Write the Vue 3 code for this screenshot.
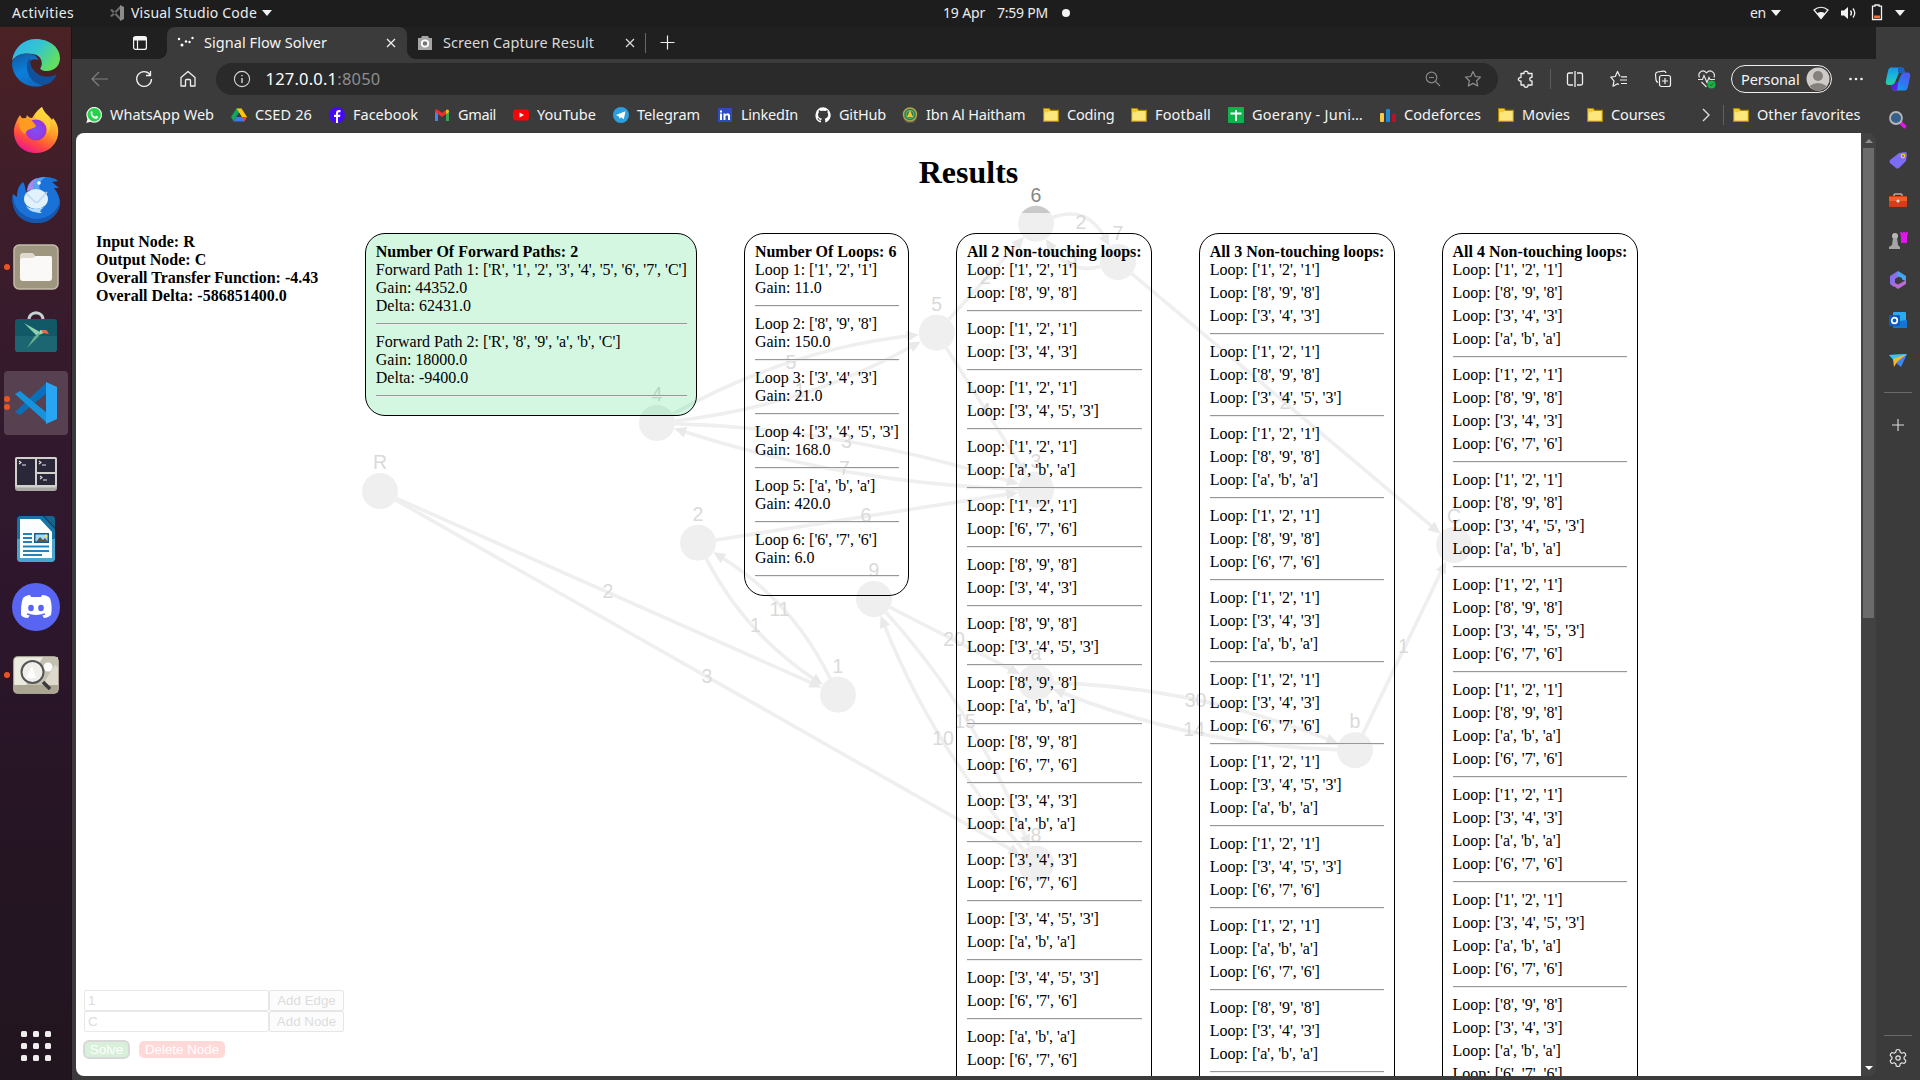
<script setup>
const vFit = {
  mounted(el, { value }) {
    const natural = el.getBoundingClientRect().width
    el.style.letterSpacing = (value - natural) / el.textContent.length + 'px'
  }
}

const bookmarks = [
  { name: 'WhatsApp Web', icon: 'whatsapp', w: 104 },
  { name: 'CSED 26', icon: 'drive', w: 57 },
  { name: 'Facebook', icon: 'facebook', w: 65 },
  { name: 'Gmail', icon: 'gmail', w: 38 },
  { name: 'YouTube', icon: 'youtube', w: 59 },
  { name: 'Telegram', icon: 'telegram', w: 63 },
  { name: 'LinkedIn', icon: 'linkedin', w: 57 },
  { name: 'GitHub', icon: 'github', w: 47 },
  { name: 'Ibn Al Haitham', icon: 'ibn', w: 99.5 },
  { name: 'Coding', icon: 'folder', w: 47.5 },
  { name: 'Football', icon: 'folder', w: 56 },
  { name: 'Goerany - Juni…', icon: 'sheet', w: 111 },
  { name: 'Codeforces', icon: 'codeforces', w: 77 },
  { name: 'Movies', icon: 'folder', w: 48 },
  { name: 'Courses', icon: 'folder', w: 54 }
]
const bookmarkWidths = [145, 98, 105, 79, 100, 104, 98, 87, 141, 88, 97, 152, 118, 89, 80]

const A = "['1', '2', '1']"
const B = "['8', '9', '8']"
const C = "['3', '4', '3']"
const D = "['3', '4', '5', '3']"
const E = "['a', 'b', 'a']"
const F = "['6', '7', '6']"

const paths = [
  { nodes: "['R', '1', '2', '3', '4', '5', '6', '7', 'C']", gain: '44352.0', delta: '62431.0' },
  { nodes: "['R', '8', '9', 'a', 'b', 'C']", gain: '18000.0', delta: '-9400.0' }
]
const loops = [
  { nodes: A, gain: '11.0' },
  { nodes: B, gain: '150.0' },
  { nodes: C, gain: '21.0' },
  { nodes: D, gain: '168.0' },
  { nodes: E, gain: '420.0' },
  { nodes: F, gain: '6.0' }
]
const groups = [
  {
    n: 2,
    sets: [[A, B], [A, C], [A, D], [A, E], [A, F], [B, C], [B, D], [B, E], [B, F], [C, E], [C, F], [D, E], [D, F], [E, F]]
  },
  {
    n: 3,
    sets: [[A, B, C], [A, B, D], [A, B, E], [A, B, F], [A, C, E], [A, C, F], [A, D, E], [A, D, F], [A, E, F], [B, C, E], [B, C, F]]
  },
  {
    n: 4,
    sets: [[A, B, C, E], [A, B, C, F], [A, B, D, E], [A, B, D, F], [A, B, E, F], [A, C, E, F], [A, D, E, F], [B, C, E, F]]
  }
]

const nodes = {
  R: [380, 491], 4: [657, 423], 5: [936.7, 332.7], 2: [698, 542.7], 9: [874, 599], 1: [838, 694.7],
  8: [1036, 863.7], a: [1036, 682.3], 6: [1036, 223.7], 7: [1118, 262], 3: [1036, 489.7], C: [1454, 545], b: [1355, 750.2]
}
const edgeList = [
  ['R', '1', '2'], ['R', '8', '3'],
  ['2', '1', '1', -23, 15], ['1', '2', '11', 25, -17],
  ['4', '5', '5', -10, -28], ['4', '5', '1', 8, 28],
  ['4', '3', '3', 2, -27], ['3', '4', '7', -2, 27],
  ['2', '3', '6'], ['5', '6', '2'], ['5', '3', '4'],
  ['6', '7', '2', 10, -38], ['7', '6', '3', -8, 32],
  ['7', 'C', '2'], ['9', 'a', '20'],
  ['8', '9', '10', -22, 16], ['9', '8', '15', 22, -18],
  ['a', 'b', '30', 2, -29], ['b', 'a', '14', -1, 29],
  ['b', 'C', '1']
]
const R = 18
const edges = edgeList.map(([s, t, label, ox = 0, oy = 0]) => {
  const p = nodes[s]
  const q = nodes[t]
  const c = [(p[0] + q[0]) / 2 + ox, (p[1] + q[1]) / 2 + oy]
  const toward = (from, d) => {
    const dx = c[0] - from[0]
    const dy = c[1] - from[1]
    const l = Math.hypot(dx, dy)
    return [from[0] + (dx / l) * d, from[1] + (dy / l) * d, dx / l, dy / l]
  }
  const a = toward(p, R)
  const b = toward(q, R + 9)
  const tip = toward(q, R)
  const base = toward(q, R + 12)
  const nx = -tip[3] * 5.5
  const ny = tip[2] * 5.5
  return {
    label,
    d: `M${a[0]} ${a[1]}Q${c[0]} ${c[1]} ${b[0]} ${b[1]}`,
    head: `${tip[0]},${tip[1]} ${base[0] + nx},${base[1] + ny} ${base[0] - nx},${base[1] - ny}`,
    x: (p[0] + q[0]) / 2 + ox / 2 - 1,
    y: (p[1] + q[1]) / 2 + oy / 2 + 5.5
  }
})
</script>

<template>
  <div class="desktop">
    <header class="topbar">
      <span class="activities"><span v-fit="62">Activities</span></span>
      <svg class="code-mini" width="16" height="16" viewBox="0 0 16 16"><path d="M1 5l2-1 8 8-0 3zM1 11l2 1 8-8V1z" fill="#6d6d6d" /><path d="M11 0l4 2v12l-4 2z" fill="#8b8b8b" /></svg>
      <span class="appname"><span v-fit="126">Visual Studio Code</span></span>
      <i class="tri"></i>
      <span class="date"><span v-fit="42">19 Apr</span></span>
      <span class="time"><span v-fit="51">7:59 PM</span></span>
      <i class="rec"></i>
      <span class="lang"><span v-fit="16">en</span></span>
      <i class="tri"></i>
      <svg class="wifi" width="16" height="14" viewBox="0 0 16 14"><path d="M1 4C5 .3 11 .3 15 4L8 12.5z" fill="none" stroke="#f2f2f2" stroke-width="1.2" /><path d="M4 7.2Q8 4.6 12 7.2L8 12.7z" fill="#f2f2f2" /></svg>
      <svg class="vol" width="17" height="14" viewBox="0 0 17 14"><path d="M0 4.500h3L7 1v12L3 9.500H0z" fill="#f2f2f2" /><path d="M9.500 4.500q2 2.500 0 5M12 2.500q3.500 4.500 0 9" fill="none" stroke="#f2f2f2" stroke-width="1.300" /></svg>
      <svg class="bat" width="12" height="17" viewBox="0 0 12 17"><path d="M4 1h4v1.200h2.500v13.300h-9V2.200H4z" fill="none" stroke="#f2f2f2" stroke-width="1.300" /><rect x="3" y="11.500" width="6" height="2.500" fill="#f0743a" /></svg>
      <i class="tri"></i>
    </header>

    <div class="main">
      <nav class="dock">
        <div class="slot">
          <svg width="48" height="48" viewBox="0 0 48 48">
            <defs>
              <linearGradient id="e1" x1="0" y1="0" x2="1" y2=".5"><stop offset="0" stop-color="#2fb0f0" /><stop offset=".55" stop-color="#35c5d0" /><stop offset="1" stop-color="#62df60" /></linearGradient>
              <linearGradient id="e2" x1="0" y1="0" x2=".4" y2="1"><stop offset="0" stop-color="#12589f" /><stop offset=".6" stop-color="#0b7fdc" /><stop offset="1" stop-color="#0f6cc4" /></linearGradient>
            </defs>
            <path d="M0 22C2 8 12 0 24 0c14 0 24 9 24 19 0 8-6 13-13 13-5 0-8-2-6-4 2-3 1-12-8-13C12 13 3 16 0 22z" fill="url(#e1)" />
            <path d="M0 24c2-8 11-11 18-9 6 1 8 4 8 6-7-3-12 3-9 12 3 8 10 13 15 13C16 52 0 40 0 24z" fill="url(#e2)" />
            <path d="M18 19c-7 6-2 27 14 27 6-1 10-5 12-9 1-1 0-2-1-1-14 6-26-5-25-17z" fill="#11509a" />
          </svg>
        </div>
        <div class="slot">
          <svg class="up1" width="46" height="46" viewBox="0 0 46 46">
            <defs>
              <linearGradient id="f1" x1=".8" y1="0" x2=".3" y2="1"><stop offset="0" stop-color="#fff14a" /><stop offset=".45" stop-color="#ff9a28" /><stop offset=".75" stop-color="#ff4a40" /><stop offset="1" stop-color="#ee1590" /></linearGradient>
              <radialGradient id="f2"><stop offset="0" stop-color="#7a52f5" /><stop offset="1" stop-color="#9b34dc" /></radialGradient>
            </defs>
            <path d="M7 8c1 3 3 4 6 3l1-3c1 2 3 3 5 3C22 7 24 3 29 0c2 6 7 8 10 13l1-2c4 5 6 10 5 17-2 11-11 18-22 18C9 46 0 36 1 22c1-5 3-10 6-14z" fill="url(#f1)" />
            <circle cx="23" cy="23" r="10.500" fill="url(#f2)" />
            <path d="M6 13c6-3 12-3 17 6-3 4-8 1-11 8C8 25 5 19 6 13z" fill="#ff9c20" />
            <path d="M29 0c-6 5-8 8-7 12 7 0 14 6 12 15 6-7 3-15-1-19-2-2-3-5-4-8z" fill="#ffd83c" opacity=".7" />
          </svg>
        </div>
        <div class="slot">
          <svg class="down1" width="48" height="46" viewBox="0 0 48 46">
            <path d="M1 17l4 3C5 13 7 8 11 5c2 3 3 8 3 12L16 8C20 1 28 0 34 0c4 0 9 1 12 4l-6 1 7 6-5 0c4 5 6 10 6 16-2 12-12 19-23 19C9 46-2 34 1 17z" fill="#1a72d8" />
            <path d="M1 17c0 11 6 22 22 25 13 0 22-7 25-18C47 38 37 46 25 46 8 46-2 33 1 17z" fill="#1556ae" />
            <path d="M16 11C21 2 28 0 34 0c-7 3-8 10-5 17z" fill="#58a2f4" />
            <path d="M15 14c1-7 5-12 11-13-5 4-6 7-5 11z" fill="#ae86e9" />
            <ellipse cx="24" cy="22" rx="12" ry="10" fill="#e3f1fc" /><path d="M14 16l9 9q2 1 4-1l8-9" fill="none" stroke="#bbd8ef" stroke-width="1.500" /><path d="M14 29c4 3 10 4 18 1-4 4-5 4-2 6-8 0-13-2-16-7z" fill="#b8dcff" /><circle cx="27" cy="6" r="1.800" fill="#fff" />
          </svg>
        </div>
        <div class="slot"><i class="run one"></i>
          <svg width="46" height="46" viewBox="0 0 46 46"><rect x="1" y="1" width="44" height="44" rx="5" fill="#9f9680" stroke="#c2bca9" stroke-width="1.500" /><path d="M7 12q0-3 3-3h9q2 0 3 3h15q2 0 2 2v10H7z" fill="#dfdacd" /><path d="M7 16q0-1 2-2h11l3-2h14q2 0 2 2v20q0 3-3 3H10q-3 0-3-3z" fill="#faf9f8" /></svg>
        </div>
        <div class="slot">
          <svg class="up3" width="44" height="42" viewBox="0 0 44 42"><path d="M15 10C14-1 30-1 29 10" fill="none" stroke="#c9d0cf" stroke-width="3" /><rect x="1" y="8" width="42" height="33" rx="3" fill="#125967" /><path d="M1 25h42v13q0 3-3 3H4q-3 0-3-3z" fill="#1c6672" /><path d="M10 12l16 9-2 5z" fill="#8ed1ac" /><path d="M13 37l7-11 6-5-2 5z" fill="#68ad90" /><path d="M26 19l8 1-9 4z" fill="#9bd9bb" /><path d="M27 19h5l3 4-6-1z" fill="#fa6541" /></svg>
        </div>
        <div class="slot active"><i class="run two"></i><i class="run three"></i>
          <svg width="42" height="42" viewBox="0 0 42 42"><path d="M0 30l5 3L32 11V0z" fill="#0a6fb8" /><path d="M0 12l5-3 27 22v10z" fill="#1793dd" /><path d="M31 0l11 5v32l-11 5z" fill="#2aa5f4" /></svg>
        </div>
        <div class="slot">
          <svg class="down3" width="42" height="34" viewBox="0 0 42 34"><rect width="42" height="34" rx="3" fill="#a9a7a3" /><rect width="42" height="30.500" rx="2" fill="#d2d0cc" /><path d="M2 2h18v26H2zM22 2h18v13H22zM22 17h18v11H22z" fill="#292738" /><path d="M4 4l2 1.500L4 7M7 8h4M24 4l2 1.500L24 7M27 8h4M25 19l2 1.500-2 1.500M28 23h4" fill="none" stroke="#e8e8e8" stroke-width="1.100" /></svg>
        </div>
        <div class="slot">
          <svg width="38" height="46" viewBox="0 0 38 46"><path d="M4 0h22l12 13v29q0 4-4 4H4q-4 0-4-4V4q0-4 4-4z" fill="#1574a4" /><path d="M0 23h38v19q0 4-4 4H4q-4 0-4-4z" fill="#47a6d0" /><path d="M27 0h8q3 0 3 3v9z" fill="#16658f" /><path d="M3 3h20l12 13v26H3z" fill="#fcfdfe" /><rect x="17" y="17" width="15" height="10" fill="#1a5c86" /><rect x="18.500" y="18.500" width="12" height="7" fill="#9edcfa" /><path d="M19 26l4-5 3 3 2-2 3 4z" fill="#595752" /><circle cx="29" cy="20" r="1.500" fill="#ffe058" /><path d="M6 18h9M6 22h9M6 26h9M6 30.500h26M6 35h26M6 39h19" stroke="#2382b8" stroke-width="2" /></svg>
        </div>
        <div class="slot">
          <svg width="48" height="48" viewBox="0 0 48 48"><circle cx="24" cy="24" r="24" fill="#5865f2" /><path d="M18 12l1 2h10l1-2c3 0 6 1 8 3 2 6 2 12 1 17-2 2-5 3-7 3l-2-3H18l-2 3c-3 0-6-1-7-3 0-6 0-12 2-17 2-2 5-3 7-3z" fill="#fff" /><ellipse cx="19" cy="25" rx="2.800" ry="3.200" fill="#5865f2" /><ellipse cx="29" cy="25" rx="2.800" ry="3.200" fill="#5865f2" /><path d="M15 31q9 3.500 18 0" fill="none" stroke="#5865f2" stroke-width="1.400" /></svg>
        </div>
        <div class="slot"><i class="run one"></i>
          <svg width="46" height="38" viewBox="0 0 46 38"><rect x=".7" y=".7" width="44.600" height="36.600" rx="4" fill="#ecebe2" stroke="#b9b5a4" /><path d="M30 1h15v28H13z" fill="#c4c1b1" /><path d="M42 9l3 2v19H29z" fill="#dddacd" /><circle cx="35" cy="11" r="4.500" fill="#fbfbfb" /><path d="M1 29h44v4q0 4-4 4H5q-4 0-4-4z" fill="#aaa692" /><circle cx="19.500" cy="16" r="11" fill="#f0efeb" stroke="#555" stroke-width="2" /><path d="M13 22l6-12 4 12z" fill="#fff" /><path d="M30 26l7 7" stroke="#3a3a3a" stroke-width="3.500" /></svg>
        </div>
        <div class="apps"><i v-for="n in 9" :key="n"></i></div>
      </nav>

      <div class="browser">
        <div class="tabs">
          <svg class="tabmenu" width="16" height="16" viewBox="0 0 16 16"><rect x="1.600" y="1.600" width="12.800" height="12.800" rx="2" fill="none" stroke="#f3f3f3" stroke-width="1.200" /><path d="M1.500 2h13v3.500h-13z" fill="#f3f3f3" /><path d="M5.500 5v9" stroke="#f3f3f3" stroke-width="1.200" /></svg>
          <div class="tab on">
            <svg width="18" height="18" viewBox="0 0 18 18" fill="#fff"><circle cx="2" cy="5" r="1.200" /><circle cx="5" cy="11" r="1.500" /><circle cx="9" cy="7.500" r="1.200" /><circle cx="12.500" cy="8" r="1.200" /><circle cx="15.500" cy="4" r="1.200" /></svg>
            <b class="title"><span v-fit="123">Signal Flow Solver</span></b>
            <svg class="x" width="10" height="10" viewBox="0 0 10 10"><path d="M1 1l8 8M9 1l-8 8" stroke="#f0f0f0" stroke-width="1.200" /></svg>
          </div>
          <div class="tab off">
            <svg width="16" height="16" viewBox="0 0 16 16"><path d="M1 3h3l1-2h6l1 2h3v12H1z" fill="#a5a5a5" /><circle cx="8" cy="8.500" r="3.200" fill="#777" stroke="#fff" stroke-width="1.700" /></svg>
            <b class="title"><span v-fit="151">Screen Capture Result</span></b>
            <svg class="x" width="10" height="10" viewBox="0 0 10 10"><path d="M1 1l8 8M9 1l-8 8" stroke="#dcdcdc" stroke-width="1.200" /></svg>
          </div>
          <i class="tabsep"></i>
          <svg class="newtab" width="16" height="16" viewBox="0 0 16 16"><path d="M7.500 .5v14M.5 7.500h14" stroke="#efefef" stroke-width="1.200" /></svg>
        </div>

        <div class="toolbar">
          <svg class="back" width="20" height="20" viewBox="0 0 20 20"><path d="M18 10H2.500M9 3l-7 7 7 7" fill="none" stroke="#808080" stroke-width="1.200" /></svg>
          <svg class="reload" width="20" height="20" viewBox="0 0 20 20"><path d="M16 5.500A7.400 7.400 0 1 0 17.500 10M16.500 2v4.500H12" fill="none" stroke="#f0f0f0" stroke-width="1.300" /></svg>
          <svg class="home" width="20" height="20" viewBox="0 0 20 20"><path d="M3 8.500L10 2.500l7 6v8.500h-4.500v-5.500q0-1-1-1h-3q-1 0-1 1V17H3z" fill="none" stroke="#f0f0f0" stroke-width="1.300" stroke-linejoin="round" /></svg>
          <div class="omni">
            <svg width="18" height="18" viewBox="0 0 18 18"><circle cx="9" cy="9" r="7.600" fill="none" stroke="#d8d8d8" stroke-width="1.100" /><path d="M9 8v5M9 5v1.300" stroke="#e6e6e6" stroke-width="1.300" /></svg>
            <span class="url"><span v-fit="115">127.0.0.1<em>:8050</em></span></span>
            <svg class="zoomout" width="16" height="16" viewBox="0 0 16 16"><circle cx="6.500" cy="6.500" r="5.300" fill="none" stroke="#878787" stroke-width="1.200" /><path d="M10.500 10.500L15 15M4 6.500h5" stroke="#878787" stroke-width="1.200" /></svg>
            <svg class="star" width="18" height="18" viewBox="0 0 18 18"><path d="M9 1.500l2.300 5 5.200.6-3.900 3.600 1.100 5.300L9 13.400 4.300 16l1.100-5.300L1.500 7.100l5.200-.6z" fill="none" stroke="#8f8f8f" stroke-width="1.200" stroke-linejoin="round" /></svg>
          </div>
          <svg class="puzzle" width="18" height="18" viewBox="0 0 18 18"><path d="M4 3.500h3c-.5-3 4.500-3 4 0H15v3.800c-3-.5-3 4.200 0 3.700V15h-4c.5 3-4.500 3-4 0H4v-4c-3.500.5-3.500-4 0-3.500z" fill="none" stroke="#f0f0f0" stroke-width="1.300" stroke-linejoin="round" /></svg>
          <i class="sep"></i>
          <svg class="split" width="18" height="18" viewBox="0 0 18 18"><path d="M7 3H3Q1.500 3 1.500 4.500v9Q1.500 15 3 15h4M11 3h4q1.500 0 1.500 1.500v9Q16.500 15 15 15h-4M9 1v16" fill="none" stroke="#f0f0f0" stroke-width="1.300" /></svg>
          <svg class="favs" width="18" height="18" viewBox="0 0 18 18"><path d="M10 6.500L7.500 1.500 5.300 6.500l-4.500.7L4 10.800 3 16.200l4.500-2.500 1.500.8M11 6.800h6M10 10h7M11 13.500h6" fill="none" stroke="#f0f0f0" stroke-width="1.200" stroke-linejoin="round" /></svg>
          <svg class="coll" width="18" height="18" viewBox="0 0 18 18"><rect x="5.500" y="5.500" width="11" height="11" rx="2" fill="none" stroke="#f0f0f0" stroke-width="1.200" /><path d="M11 8v6M8 11h6M4 12.500Q2.500 12 2 10L1.500 4.500Q1.500 2.500 3.500 2l6-.8Q11.500 1 12 3" fill="none" stroke="#f0f0f0" stroke-width="1.200" /></svg>
          <svg class="heart" width="20" height="20" viewBox="0 0 20 20"><path d="M2.500 8.500C0 3 6 0 9.500 3.800 13 0 19 3 17 8.500M4.500 13l5 5M1 10.500h4.500l1.500-4 3 7 2-5 1 2h5" fill="none" stroke="#e4e4e4" stroke-width="1.200" /><circle cx="14.500" cy="15.500" r="4" fill="#17b443" /><path d="M12.700 15.500l1.300 1.300 2.300-2.600" fill="none" stroke="#3b3b3b" stroke-width=".9" /></svg>
          <div class="pill"><span class="ptext"><span v-fit="58.5">Personal</span></span>
            <svg width="24" height="24" viewBox="0 0 24 24"><circle cx="12" cy="12" r="11.500" fill="#cecac5" /><circle cx="12" cy="9" r="5" fill="#85807b" /><path d="M3.500 19q8.500-6 17 0-3.500 4.500-8.500 4.500T3.500 19z" fill="#85807b" /></svg>
          </div>
          <svg class="more" width="16" height="4" viewBox="0 0 16 4" fill="#f0f0f0"><circle cx="2.500" cy="2" r="1.300" /><circle cx="8" cy="2" r="1.300" /><circle cx="13.500" cy="2" r="1.300" /></svg>
        </div>

        <div class="bookmarks">
          <div v-for="(b, i) in bookmarks" :key="b.name" class="bm" :style="{ width: bookmarkWidths[i] + 'px' }">
            <svg width="16" height="16" viewBox="0 0 16 16">
              <template v-if="b.icon === 'whatsapp'"><circle cx="8.200" cy="7.800" r="7.300" fill="#25d34b" stroke="#f4f4f4" stroke-width="1.200" /><path d="M.3 16l1.500-5 3.500 3.500z" fill="#f4f4f4" /><path d="M5 4.500q1-1 1.700 1l-.5 1.500q1 2 3 2.800l1-1 2 1q-.5 2.500-3 2Q5 10.500 4.500 6z" fill="#fff" /></template>
              <template v-else-if="b.icon === 'drive'"><path d="M5.500 1.500h5L5.300 10l-2.600 4.500L0 10z" fill="#15a45b" /><path d="M5.500 1.500h5L16 10h-5z" fill="#ffc60a" /><path d="M5.300 10H16l-2.700 4.500H2.700z" fill="#3b79ec" /><path d="M11 10h5l-2.700 4.500z" fill="#ea4335" /></template>
              <template v-else-if="b.icon === 'facebook'"><circle cx="8" cy="8" r="8" fill="#4708f5" /><path d="M7 16v-6H5V7.700h2V6q0-3 3-3h1.500v2.200H10Q9 5.200 9 6.200v1.500h2.400L11 10H9v6z" fill="#fff" /></template>
              <template v-else-if="b.icon === 'gmail'"><path d="M1 3.500l3 2.200V14H1z" fill="#4285f4" /><path d="M12 5.700l3-2.200V14h-3z" fill="#34a853" /><path d="M1 3.500Q2 1.500 4 3l4 3 4-3v4L8 10 4 7 1 5z" fill="#ea3030" /><path d="M12 3q2.500-1.500 3 1v1l-3 2.200z" fill="#fbbc04" /></template>
              <template v-else-if="b.icon === 'youtube'"><rect y="2.500" width="16" height="11" rx="3" fill="#fa0505" /><path d="M6.500 5.500L11 8l-4.500 2.500z" fill="#fff" /></template>
              <template v-else-if="b.icon === 'telegram'"><circle cx="8" cy="8" r="8" fill="#2c9fdf" /><path d="M3 8l9.500-3.800-1.700 8L8 10.300l-1.500 1.500L6 9.500z" fill="#fff" /></template>
              <template v-else-if="b.icon === 'linkedin'"><rect x="1" y="1" width="14" height="14" fill="#2f4bbf" /><path d="M3 6.500h2V13H3zM3 3.500h2v2H3zM6.500 6.500h2v1q3-2.500 4.500.5v5h-2V9q-1-1.500-2.500 0v4h-2z" fill="#fff" /></template>
              <path v-else-if="b.icon === 'github'" d="M8 .2a8 8 0 0 0-2.500 15.400c.4 0 .5-.2.500-.5v-1.700c-2.200.5-2.700-1-2.700-1-.5-1-1-1.200-1-1.200 1-.5 1.500.5 1.800.9.700 1.200 2 .8 2.300.6 0-.5.3-.9.500-1.100C4.700 11.300 3 10.500 3 7.500c0-.9.400-1.500.9-2.100-.1-.3-.4-1.100 0-2.200 0 0 .8-.2 2.300.8a8 8 0 0 1 4 0c1.500-1 2.200-.8 2.200-.8.400 1.100.1 1.900 0 2.200.5.600.8 1.200.8 2.100 0 3-1.800 3.800-3.600 4 .3.300.6.800.6 1.600v2c0 .3.100.5.500.5A8 8 0 0 0 8 .2z" fill="#fff" />
              <template v-else-if="b.icon === 'ibn'"><path d="M1 11h14l-3 5H4z" fill="#55554e" /><circle cx="8" cy="7.500" r="6.500" fill="#277b54" stroke="#b6a34b" stroke-width="1.500" /><circle cx="8" cy="7.500" r="4" fill="none" stroke="#5fc26f" /><path d="M8 3l3 7H5z" fill="#f3c32c" /></template>
              <template v-else-if="b.icon === 'sheet'"><rect width="16" height="16" rx="1" fill="#0fb34b" /><path d="M2.500 6.500h11M8 3v11" stroke="#fff" stroke-width="1.800" /></template>
              <template v-else-if="b.icon === 'codeforces'"><rect y="6" width="4" height="9" rx="1" fill="#f5ca45" /><rect x="6" y="2" width="4" height="13" rx="1" fill="#2287d2" /><rect x="12" y="7" width="4" height="8" rx="1" fill="#b5122b" /></template>
              <template v-else><path d="M.6 1.600h5.500l1.500 1.800h7.800v11H.6z" fill="#fce77c" stroke="#ae8800" stroke-width="1.200" /><path d="M1.200 2.200h4.500l1 1.500-1.500 1.600h-4z" fill="#f4cd21" /></template>
            </svg>
            <span class="bt"><span v-fit="b.w">{{ b.name }}</span></span>
          </div>
          <svg class="chev" width="10" height="14" viewBox="0 0 10 14"><path d="M2 1l6 6-6 6" fill="none" stroke="#dedede" stroke-width="1.400" /></svg>
          <i class="bsep"></i>
          <div class="bm">
            <svg width="16" height="16" viewBox="0 0 16 16"><path d="M.6 1.600h5.500l1.500 1.800h7.800v11H.6z" fill="#fce77c" stroke="#ae8800" stroke-width="1.200" /><path d="M1.200 2.200h4.500l1 1.500-1.500 1.600h-4z" fill="#f4cd21" /></svg>
            <span class="bt"><span v-fit="103.5">Other favorites</span></span>
          </div>
        </div>

        <div class="viewport">
          <div class="page">
            <svg class="graph" width="1785" height="943" viewBox="76 133 1785 943">
              <g fill="none" stroke="#efefef" stroke-width="3.600"><path v-for="(e, i) in edges" :key="i" :d="e.d" /></g>
              <g fill="#e9e9e9"><polygon v-for="(e, i) in edges" :key="i" :points="e.head" /></g>
              <g fill="#efefef"><circle v-for="(p, k) in nodes" :key="k" :cx="p[0]" :cy="p[1]" r="18" /></g>
              <path d="M1021.600 213a18 18 0 0 1 28.800 0z" fill="#c9c9c9" />
              <g class="labels">
                <text v-for="(e, i) in edges" :key="i" :x="e.x" :y="e.y">{{ e.label }}</text>
                <text v-for="(p, k) in nodes" :key="k" :x="p[0]" :y="p[1] - 22" :class="{ strong: k === '6' }">{{ k }}</text>
              </g>
            </svg>
            <div class="controls">
              <div class="crow"><span class="inp">1</span><span class="btn">Add Edge</span></div>
              <div class="crow"><span class="inp">C</span><span class="btn">Add Node</span></div>
              <div class="crow acts"><span class="solve">Solve</span><span class="del">Delete Node</span></div>
            </div>
            <div class="results">
              <h1>Results</h1>
              <div class="cols">
                <div class="summary">
                  <div>Input Node: R</div>
                  <div>Output Node: C</div>
                  <div>Overall Transfer Function: -4.43</div>
                  <div>Overall Delta: -586851400.0</div>
                </div>
                <section class="box green">
                  <b>Number Of Forward Paths: 2</b>
                  <template v-for="(p, i) in paths" :key="i">
                    <div>Forward Path {{ i + 1 }}: {{ p.nodes }}</div>
                    <div>Gain: {{ p.gain }}</div>
                    <div>Delta: {{ p.delta }}</div>
                    <hr />
                  </template>
                </section>
                <section class="box">
                  <b>Number Of Loops: 6</b>
                  <template v-for="(l, i) in loops" :key="i">
                    <div>Loop {{ i + 1 }}: {{ l.nodes }}</div>
                    <div>Gain: {{ l.gain }}</div>
                    <hr />
                  </template>
                </section>
                <section v-for="g in groups" :key="g.n" class="box">
                  <b>All {{ g.n }} Non-touching loops:</b>
                  <template v-for="(s, i) in g.sets" :key="i">
                    <div v-for="l in s" :key="l" class="loop">Loop: {{ l }}</div>
                    <hr />
                  </template>
                </section>
              </div>
            </div>
          </div>
          <div class="scroll"><i class="up"></i><i class="thumb"></i><i class="down"></i></div>
        </div>
      </div>

      <aside class="side">
        <svg class="copilot" width="26" height="24" viewBox="0 0 26 24"><defs><linearGradient id="c1" x1="0" y1="0" x2="0" y2="1"><stop offset="0" stop-color="#1496e6" /><stop offset=".5" stop-color="#19b9dd" /><stop offset="1" stop-color="#27d19a" /></linearGradient><linearGradient id="c2" x1="0" y1="1" x2=".6" y2="0"><stop offset="0" stop-color="#15a5ea" /><stop offset=".5" stop-color="#2c7cf0" /><stop offset="1" stop-color="#4a5cf4" /></linearGradient></defs><path d="M6 .5h11q2.500.5 2.500 5H14l-4 10q-1 2.500-4 2.500H3Q0 17.500 1 13.500L3 4Q3.800.5 6 .5z" fill="url(#c1)" /><path d="M13 .5h3.500q2.500 0 3 5H13z" fill="#1a5fc6" /><path d="M20 23.500H9q-2-.5-2.500-5.500H12l4-10q1-2.500 4-2.500h3q3 .5 2 4.500l-2 9.500q-.8 4-3 4z" fill="url(#c2)" /><path d="M12 23.500H9Q7 23 6.500 18q3.500 0 4.500-3h2z" fill="#5b1fe2" /></svg>
        <svg width="20" height="20" viewBox="0 0 20 20"><path d="M12.500 12.500l5 5" stroke="#e318e8" stroke-width="3.500" /><circle cx="8" cy="8" r="6" fill="#37618c" stroke="#b6b6b6" stroke-width="1.800" /></svg>
        <svg width="20" height="20" viewBox="0 0 20 20"><path d="M11 3l6-1q2 0 2 2l-1 7-7 7q-2 1-3 0l-6-5q-1-2 0-3z" fill="#7c6cf5" /><circle cx="15" cy="6" r="1.800" fill="none" stroke="#f3cb24" stroke-width="1.300" /></svg>
        <svg width="20" height="20" viewBox="0 0 20 20"><path d="M6 7V5q0-1 1-1h6q1 0 1 1v2" fill="none" stroke="#b9aaa6" stroke-width="1.500" /><rect x="1" y="6" width="18" height="11" rx="1" fill="#d73b18" /><path d="M1 7h18v4H1z" fill="#f55c2c" /><circle cx="10" cy="11" r="1.600" fill="#d9d9d9" /></svg>
        <svg width="20" height="20" viewBox="0 0 20 20"><path d="M12 2h2v1h1V2h2v1h1V2h2l-1 5v6h-6V7z" fill="#e215ed" /><circle cx="7" cy="6" r="3" fill="#b7b7b7" /><path d="M5 8h4l1 7 2 2v2H1v-2l3-2z" fill="#a5a5a5" /></svg>
        <svg width="20" height="20" viewBox="0 0 20 20"><path d="M10 1L2 6v8l4 3 1-2V9l4-2.500z" fill="#8a6fe8" /><path d="M10 1l8 5v5l-4-1.500V8l-5-2z" fill="#45a5f0" /><path d="M3 14l7 5 8-5v-4l-8 4.500L7 13z" fill="#bb6bd8" /></svg>
        <svg width="20" height="20" viewBox="0 0 20 20"><rect x="5" y="2" width="13" height="15" rx="1" fill="#2baaf0" /><path d="M5 12l14-2v8H5z" fill="#1674d2" /><rect x="1" y="5" width="11" height="11" rx="1" fill="#0e59bf" /><circle cx="6.500" cy="10.500" r="2.800" fill="none" stroke="#fff" stroke-width="1.700" /></svg>
        <svg width="20" height="20" viewBox="0 0 20 20"><path d="M1 5l18-1-6 13-5-4z" fill="#3c86ee" /><path d="M1 5l18-1L6 10z" fill="#3bc5f2" /><path d="M5 9l14-5-10 8-3 5z" fill="#f5b82c" /></svg>
        <i class="line"></i>
        <svg class="plus" width="16" height="16" viewBox="0 0 16 16"><path d="M8 2v12M2 8h12" stroke="#ddd" stroke-width="1.100" /></svg>
        <i class="line low"></i>
        <svg class="gear" width="20" height="20" viewBox="0 0 20 20"><path d="M8.300 2q1.700-1 3.400 0l.6 2.300 1.500.9 2.300-.7q1.700 1 1.700 2.900l-1.700 1.700v1.800l1.700 1.700q0 1.900-1.700 2.900l-2.300-.7-1.500.9-.6 2.300q-1.700 1-3.400 0l-.6-2.300-1.500-.9-2.300.7q-1.700-1-1.700-2.900l1.700-1.700V9.100L2.200 7.400q0-1.900 1.700-2.900l2.300.7 1.500-.9z" fill="none" stroke="#e6e6e6" stroke-width="1.200" stroke-linejoin="round" /><circle cx="10" cy="10" r="2.200" fill="none" stroke="#e6e6e6" stroke-width="1.200" /></svg>
      </aside>
    </div>
  </div>
</template>

<style>
html, body { margin: 0; overflow: hidden; background: #3b3b3b; }
</style>

<style scoped>
* { box-sizing: border-box; }
svg { display: block; flex: none; }
i, em { font-style: normal; }
.desktop { width: 1920px; height: 1080px; display: flex; flex-direction: column; overflow: hidden; font: 14.5px/20px "Noto Sans", "Open Sans", sans-serif; color: #f4f4f4; background: #3b3b3b; white-space: nowrap; }
.topbar { height: 27px; flex: none; display: flex; align-items: center; background: #1d1d1d; color: #ececec; font-size: 14px; padding-bottom: 1px; }
.topbar > span { flex: none; }
.activities { width: 97px; padding-left: 12px; }
.code-mini { margin-left: 12px; }
.appname { width: 137px; padding-left: 6px; }
.tri { border: 5px solid transparent; border-top: 6px solid #f2f2f2; border-bottom: 0; flex: none; }
.date { margin-left: 671px; width: 54px; }
.time { width: 65px; }
.rec { width: 8px; height: 8px; border-radius: 50%; background: #f4f4f4; }
.lang { margin-left: 680px; width: 21px; }
.wifi { margin-left: 32px; }
.vol { margin-left: 12px; }
.bat { margin-left: 13px; margin-top: -1px; }
.bat + .tri { margin-left: 12px; }

.main { flex: 1; display: flex; min-height: 0; }
.dock { width: 72px; flex: none; display: flex; flex-direction: column; gap: 4px; align-items: center; padding-top: 4px; background: linear-gradient(#4b2224 0, #3d1d2b 18%, #32192d 38%, #2d162c 54%, #261524 76%, #21151f 100%); border-right: 1px solid #1b1118; }
.slot { width: 64px; height: 64px; flex: none; display: flex; align-items: center; justify-content: center; position: relative; border-radius: 4px; }
.up1 { margin-bottom: 2px; }
.up3 { margin-bottom: 7px; }
.down1 { margin-top: 2px; }
.down3 { margin-top: 5px; }
.active { background: #57404f; }
.run { position: absolute; left: 0; width: 6px; height: 6px; border-radius: 50%; background: #e95420; }
.run.one { top: 29px; }
.run.two { top: 25px; }
.run.three { top: 33px; }
.apps { margin-top: auto; margin-bottom: 19px; display: grid; grid-template-columns: repeat(3, 6px); gap: 6px; }
.apps i { width: 6px; height: 6px; border-radius: 1.5px; background: #f0eeec; }

.browser { width: 1804px; flex: none; display: flex; flex-direction: column; }
.tabs { height: 32px; flex: none; background: #202020; display: flex; align-items: center; }
.tabmenu { margin-left: 60px; }
.tab { height: 32px; display: flex; align-items: center; position: relative; flex: none; padding-bottom: 1px; }
.tab.on { margin-left: 19px; width: 240px; background: #3b3b3b; border-radius: 8px 8px 0 0; padding-left: 10px; }
.tab.on::before, .tab.on::after { content: ""; position: absolute; bottom: 0; width: 8px; height: 8px; }
.tab.on::before { left: -8px; background: radial-gradient(circle at 0 0, transparent 7.5px, #3b3b3b 8px); }
.tab.on::after { right: -8px; background: radial-gradient(circle at 100% 0, transparent 7.5px, #3b3b3b 8px); }
.title { font-weight: 400; width: 182px; margin-left: 9px; padding-bottom: 1px; }
.tab.off { width: 238px; padding-left: 10px; color: #d9d9d9; }
.tab.off .title { margin-left: 10px; width: 182px; }
.tabsep { width: 1px; height: 20px; background: #666; }
.newtab { margin-left: 14px; }

.toolbar { height: 40px; flex: none; display: flex; align-items: center; }
.back { margin-left: 18px; }
.reload { margin-left: 24px; }
.home { margin-left: 24px; }
.omni { margin-left: 18px; width: 1282px; height: 32px; border-radius: 16px; background: #2a2a2a; display: flex; align-items: center; flex: none; padding-left: 17px; }
.url { margin-left: 14.5px; font-size: 16.5px; width: 1159.5px; color: #fff; }
.url em { color: #8d8d8d; }
.star { margin-left: 23px; }
.puzzle { margin-left: 19px; }
.sep { width: 1px; height: 20px; background: #5b5b5b; margin-left: 15px; }
.split { margin-left: 15px; }
.favs { margin-left: 26px; }
.coll { margin-left: 26px; }
.heart { margin-left: 25px; }
.pill { margin-left: 14px; width: 101px; height: 28px; border: 1.5px solid #f0f0f0; border-radius: 14px; display: flex; align-items: center; padding-left: 9px; flex: none; }
.ptext { width: 65px; padding-bottom: 1px; }
.more { margin-left: 16px; }

.bookmarks { height: 34px; flex: none; display: flex; align-items: center; padding: 0 0 3px 14px; }
.bm { display: flex; align-items: center; flex: none; gap: 8px; }
.bt { width: 0; overflow: visible; padding-bottom: 2px; }
.bt span, .title span, .url > span, .topbar span span, .ptext span { display: inline-block; }
.chev { margin-left: 34px; }
.bsep { width: 1px; height: 20px; background: #606060; margin: 0 9px 0 12px; }

.viewport { margin-left: 4px; width: 1800px; height: 943px; display: flex; border-radius: 8px; overflow: hidden; flex: none; background: #424242; }
.page { width: 1785px; height: 943px; background: #fff; position: relative; overflow: hidden; color: #000; font: 16px/18px "Liberation Serif", "Times New Roman", serif; }
.graph { position: absolute; left: 0; top: 0; }
.labels { font: 19.5px "Liberation Sans", Arial, sans-serif; text-anchor: middle; fill: #dadada; }
.labels .strong { fill: #858585; }
.controls { position: absolute; left: 8px; top: 857px; font: 13.333px/15px "Liberation Sans", Arial, sans-serif; color: #dcdcdc; }
.crow { display: flex; height: 21px; }
.inp { width: 185px; border: 1px solid #e8e8e8; border-radius: 2px; padding: 2px 3px; line-height: 16px; }
.btn { width: 75px; border: 1px solid #e6e6e6; border-radius: 2px; background: #fcfcfc; text-align: center; line-height: 19px; }
.acts { margin-top: 8px; align-items: center; color: #fff; height: 19px; }
.solve { width: 47px; height: 19px; border: 2px solid #d8d8d8; border-radius: 6px; background: #d8efda; text-align: center; margin-left: -1px; }
.del { width: 86px; height: 17px; border-radius: 5px; background: #ffd8d8; text-align: center; margin-left: 9px; line-height: 17px; }
.results { position: relative; padding-top: 21px; }
h1 { font-size: 32px; line-height: 37px; margin: 0; text-align: center; font-weight: 700; }
.cols { display: flex; align-items: flex-start; margin-top: 42px; }
.summary { width: 289px; padding-left: 20px; font-weight: 700; flex: none; }
.box { border: 1px solid #000; border-radius: 20px; padding: 9px 9.3px 10px 9.8px; margin-right: 47px; flex: none; }
.box b { display: block; }
.green { background: rgba(40, 215, 110, .2); }
.loop + .loop { margin-top: 5px; }
hr { margin: 8px 0; border: 0 solid; border-width: 1px 0; border-color: #979797 transparent #ededed; height: 2px; }

.scroll { width: 15px; height: 943px; display: flex; flex-direction: column; align-items: center; padding: 6px 0; }
.up { border: 4px solid transparent; border-bottom: 4px solid #8e8e8e; border-top: 0; }
.thumb { width: 11px; height: 470px; background: #6b6b6b; margin-top: 5px; }
.down { border: 4px solid transparent; border-top: 4px solid #fff; border-bottom: 0; margin-top: auto; }

.side { width: 44px; flex: none; display: flex; flex-direction: column; align-items: center; gap: 20px; padding-top: 40px; }
.copilot { margin-bottom: -1px; }
.line { width: 28px; height: 1px; background: #696969; margin-top: 2px; }
.plus { margin-top: 4px; }
.low { margin-top: auto; }
.gear { margin: -8px 0 12px; }
</style>
